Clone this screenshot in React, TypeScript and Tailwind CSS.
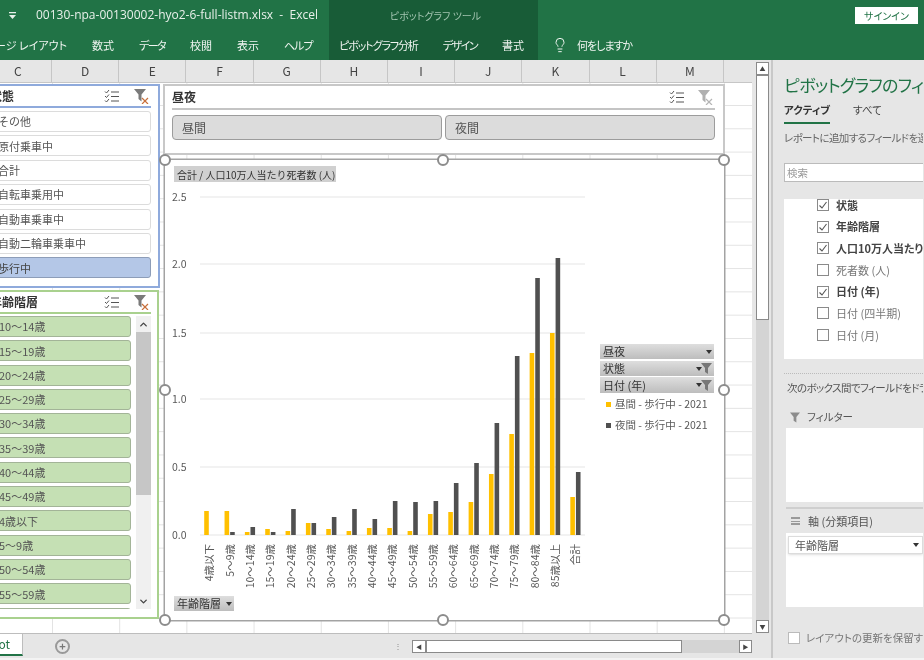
import React from 'react';
import { ChevronDown, ChevronUp, Lightbulb } from 'lucide-react';

const columns = ['C', 'D', 'E', 'F', 'G', 'H', 'I', 'J', 'K', 'L', 'M'];

const ageRows = ['10〜14歳', '15〜19歳', '20〜24歳', '25〜29歳', '30〜34歳', '35〜39歳', '40〜44歳', '45〜49歳', '4歳以下', '5〜9歳', '50〜54歳', '55〜59歳', '60〜64歳'];
const stateRows = ['その他', '原付乗車中', '合計', '自転車乗用中', '自動車乗車中', '自動二輪車乗車中'];

// pixel heights above the baseline: [label, day, night]
const bars: [string, number, number][] = [
  ['4歳以下', 24, 0], ['5〜9歳', 24, 3], ['10〜14歳', 3, 8], ['15〜19歳', 6, 3], ['20〜24歳', 4, 26],
  ['25〜29歳', 12, 12], ['30〜34歳', 6, 18], ['35〜39歳', 4, 26], ['40〜44歳', 7, 16], ['45〜49歳', 7, 34],
  ['50〜54歳', 4, 33], ['55〜59歳', 21, 34], ['60〜64歳', 23, 52], ['65〜69歳', 33, 72], ['70〜74歳', 61, 112],
  ['75〜79歳', 101, 179], ['80〜84歳', 182, 257], ['85歳以上', 202, 277], ['合計', 38, 63],
];

const gridLines: [string, number][] = [['2.5', 197], ['2.0', 264], ['1.5', 333], ['1.0', 399], ['0.5', 467], ['0.0', 535]];

const fields: [string, boolean][] = [
  ['状態', true], ['年齢階層', true], ['人口10万人当たり死者数 (人)', true], ['死者数 (人)', false],
  ['日付 (年)', true], ['日付 (四半期)', false], ['日付 (月)', false],
];

const handles = [
  'left-[-6px] top-[-6px]', 'left-[272px] top-[-6px]', 'left-[553px] top-[-6px]', 'left-[-6px] top-[224px]',
  'left-[553px] top-[224px]', 'left-[-6px] top-[454px]', 'left-[272px] top-[454px]', 'left-[553px] top-[454px]',
];

const ChecklistIcon = () => (
  <svg width="15" height="14" viewBox="0 0 15 14" fill="none" stroke="#555" strokeWidth="1">
    <path d="M1 2.5l1.5 1.5L5 1M1 7l1.5 1.5L5 5.5M1 11.5L2.5 13 5 10" />
    <path d="M7 3h8M7 7.5h8M7 12h8" />
  </svg>
);

const ClearFilterIcon = ({ muted }: { muted?: boolean }) => (
  <svg width="15" height="15" viewBox="0 0 15 15">
    <path d="M0 0h12L7.5 5.5v7L4.5 10V5.5z" fill={muted ? '#b0b0b0' : '#7a7a7a'} />
    <path d="M8 9l6 6M14 9l-6 6" stroke={muted ? '#b5b5b5' : '#c8703c'} strokeWidth="1.2" />
  </svg>
);

const SlicerHeader = ({ title, line }: { title: string; line: string }) => (
  <div className={`flex items-center h-[22px] border-b-2 ${line}`}>
    <span className="flex-1 text-[12px] font-bold text-[#333]">{title}</span>
    <span className="mr-[15px]"><ChecklistIcon /></span>
    <span className="mr-[2px]"><ClearFilterIcon /></span>
  </div>
);

const DropArrow = () => <span className="border-x-[3.5px] border-t-[4px] border-x-transparent border-t-[#333]" />;

const FieldButton = ({ label, filter, className }: { label: string; filter?: boolean; className: string }) => (
  <div className={`absolute flex items-center pl-[3px] pr-[2px] text-[11px] text-[#333] bg-gradient-to-b from-[#dedede] to-[#bdbdbd] ${className}`}>
    <span className="flex-1">{label}</span>
    <DropArrow />
    {filter && (
      <svg width="11" height="11" viewBox="0 0 11 11" className="ml-[-1px]">
        <path d="M0 0h11L7 5v6L4 9V5z" fill="#777" />
      </svg>
    )}
  </div>
);

const ChartPlot = () => (
  <svg viewBox="165 160 559 460" className="absolute inset-0 w-full h-full">
    {gridLines.map(([label, y]) => (
      <g key={label}>
        <line x1="200" x2="585" y1={y} y2={y} stroke="#e6e6e6" strokeWidth="1.2" />
        <text x="172" y={y + 4} fontSize="10.5" fill="#595959">{label}</text>
      </g>
    ))}
    {bars.map(([label, day, night], i) => {
      const center = 209.2 + 20.34 * i;
      return (
        <g key={label}>
          <rect x={center - 5} y={535 - day} width="4.6" height={day} fill="#ffc000" />
          <rect x={center + 0.6} y={535 - night} width="4.6" height={night} fill="#505050" />
          <text x={center + 4} y="544" fontSize="10.5" fill="#595959" textAnchor="end" transform={`rotate(-90 ${center + 4} 544)`}>
            {label}
          </text>
        </g>
      );
    })}
  </svg>
);

const Sheet = () => (
  <div className="relative flex-1 overflow-hidden bg-white bg-[linear-gradient(to_right,#e3e3e3_1px,transparent_1px),linear-gradient(to_bottom,#e3e3e3_1px,transparent_1px)] bg-size-[67.2px_23.3px] bg-position-[52px_22px]">
    {/* 状態 slicer */}
    <div className="absolute left-[-14px] top-[1px] w-[174px] h-[204px] bg-white border-2 border-[#8faadc] pl-[2px] pr-[7px] [font-feature-settings:normal]">
      <SlicerHeader title="状態" line="border-[#8faadc]" />
      <div className="flex flex-col gap-[3.4px] mt-[3px]">
        {stateRows.map((row) => (
          <div key={row} className="h-[21px] flex items-center pl-[7px] bg-white border border-[#dcdcdc] rounded-[3px] text-[11px] text-[#555] whitespace-nowrap">{row}</div>
        ))}
        <div className="h-[21px] flex items-center pl-[7px] bg-[#b4c7e7] border border-[#8d9db8] rounded-[3px] text-[11px] text-[#444]">歩行中</div>
      </div>
    </div>

    {/* 年齢階層 slicer */}
    <div className="absolute left-[-14px] top-[207px] w-[173px] h-[329px] bg-white border-2 border-[#a9d18e] pl-[2px] pr-[6px] [font-feature-settings:normal]">
      <SlicerHeader title="年齢階層" line="border-[#a9d18e]" />
      <div className="flex gap-[5px] mt-[2px] h-[293px]">
        <div className="flex-1 flex flex-col gap-[3.3px] overflow-hidden">
          {ageRows.map((row) => (
            <div key={row} className="h-[21px] shrink-0 flex items-center pl-[8px] bg-[#c5e0b4] border border-[#a3b498] rounded-[3px] text-[11px] text-[#555] whitespace-nowrap">{row}</div>
          ))}
        </div>
        <div className="w-[15px] flex flex-col bg-[#f0f0f0] text-[#444]">
          <div className="h-[16px] flex items-center justify-center"><ChevronUp size={11} strokeWidth={3} /></div>
          <div className="h-[163px] bg-[#c6c6c6]" />
          <div className="flex-1" />
          <div className="h-[16px] flex items-center justify-center"><ChevronDown size={11} strokeWidth={3} /></div>
        </div>
      </div>
    </div>

    {/* 昼夜 slicer */}
    <div className="absolute left-[163px] top-[1px] w-[562px] h-[71px] bg-white border-2 border-[#c8c8c8] pl-[7px] pr-[8px]">
      <div className="flex items-center h-[24px] border-b-2 border-[#c4c4c4]">
        <span className="flex-1 text-[12px] font-bold text-[#333]">昼夜</span>
        <span className="mr-[14px]"><ChecklistIcon /></span>
        <span className="mr-[2px]"><ClearFilterIcon muted /></span>
      </div>
      <div className="flex gap-[3px] mt-[5px]">
        <div className="flex-1 h-[25px] flex items-center pl-[9px] bg-[#dcdcdc] border border-[#9c9c9c] rounded-[4px] text-[12px] text-[#555]">昼間</div>
        <div className="flex-1 h-[25px] flex items-center pl-[9px] bg-[#dcdcdc] border border-[#9c9c9c] rounded-[4px] text-[12px] text-[#555]">夜間</div>
      </div>
    </div>

    {/* pivot chart */}
    <div className="absolute left-[165px] top-[77px] w-[559px] h-[460px] bg-white ring-[1.5px] ring-[#a3a3a3] [font-feature-settings:normal]">
      <ChartPlot />
      <div className="absolute left-[9px] top-[6px] w-[162px] h-[16px] flex items-center pl-[3px] bg-[#d0d0d0] text-[10px] text-[#333] whitespace-nowrap overflow-hidden">合計 / 人口10万人当たり死者数 (人)</div>
      <FieldButton label="昼夜" className="left-[435px] top-[184px] w-[114px] h-[15px]" />
      <FieldButton label="状態" filter className="left-[435px] top-[201px] w-[114px] h-[15px]" />
      <FieldButton label="日付 (年)" filter className="left-[435px] top-[217px] w-[114px] h-[16px]" />
      <FieldButton label="年齢階層" className="left-[9px] top-[436px] w-[60px] h-[15px]" />
      <div className="absolute left-[441px] top-[236px] flex flex-col gap-[5px] text-[10.5px] text-[#595959]">
        <div className="flex items-center gap-[4px] h-[16px] whitespace-nowrap"><span className="w-[5px] h-[5px] bg-[#ffc000]" />昼間 - 歩行中 - 2021</div>
        <div className="flex items-center gap-[4px] h-[16px] whitespace-nowrap"><span className="w-[5px] h-[5px] bg-[#505050]" />夜間 - 歩行中 - 2021</div>
      </div>
      {handles.map((pos) => (
        <span key={pos} className={`absolute w-[12px] h-[12px] rounded-full bg-white border-2 border-[#8c8c8c] ${pos}`} />
      ))}
    </div>
  </div>
);

const Pane = () => (
  <div className="w-[152px] ml-[2px] border-l-2 border-[#c8c8c8] pl-[11px] overflow-hidden whitespace-nowrap">
    <div className="mt-[13px] h-[24px] text-[17px] leading-[24px] tracking-[-0.7px] text-[#217346]">ピボットグラフのフィールド</div>
    <div className="flex h-[25px] mt-[5px] text-[10.5px]">
      <div className="w-[46px] h-[22px] border-b-2 border-[#217346] font-bold text-[#333]">アクティブ</div>
      <div className="ml-[23px] text-[#444]">すべて</div>
    </div>
    <div className="mt-[3px] h-[15px] leading-[15px] text-[10.5px] tracking-[-0.6px] text-[#666]">レポートに追加するフィールドを選択してください:</div>
    <div className="mt-[18px] h-[19px] w-[160px] flex items-center pl-[2px] bg-white border border-[#bbb] text-[10.5px] text-[#999]">検索</div>
    <div className="mt-[17px] h-[160px] w-[160px] bg-white overflow-hidden">
      <div className="-mt-[5px] pl-[33px]">
        {fields.map(([name, on]) => (
          <div key={name} className="h-[21.7px] flex items-center gap-[7px]">
            <span className="w-[12px] h-[12px] shrink-0 flex items-center justify-center bg-white border border-[#8a8a8a]">
              {on && (
                <svg width="10" height="10" viewBox="0 0 10 10" fill="none" stroke="#555" strokeWidth="1.1">
                  <path d="M1.5 5.5L4 8l4.5-6" />
                </svg>
              )}
            </span>
            <span className={on ? 'text-[11px] font-bold text-[#444]' : 'text-[11px] text-[#777]'}>{name}</span>
          </div>
        ))}
      </div>
    </div>
    <div className="mt-[14px] border-t border-dotted border-[#bbb]" />
    <div className="ml-[3px] mt-[6px] h-[15px] leading-[15px] text-[10.5px] tracking-[-0.6px] text-[#555]">次のボックス間でフィールドをドラッグしてください:</div>
    <div className="ml-[6px] mt-[14px] h-[16px] flex items-center gap-[7px] text-[10.5px] text-[#555]">
      <svg width="10" height="11" viewBox="0 0 11 11"><path d="M0 0h11L7 5v6L4 9V5z" fill="#8c8c8c" /></svg>
      フィルター
    </div>
    <div className="ml-[2px] mt-[3px] h-[74px] w-[160px] bg-white" />
    <div className="ml-[2px] mt-[5px] border-t-2 border-[#cfcfcf]" />
    <div className="ml-[7px] mt-[3px] h-[18px] flex items-center gap-[8px] text-[11px] text-[#555]">
      <span className="w-[9px] h-[8px] border-y-2 border-[#9a9a9a] flex items-center"><span className="w-full h-[1px] bg-[#9a9a9a]" /></span>
      軸 (分類項目)
    </div>
    <div className="ml-[2px] mt-[3px] h-[74px] w-[160px] bg-white pt-[3px] pl-[2px]">
      <div className="h-[18px] w-[135px] flex items-center pl-[6px] pr-[3px] bg-white border border-[#dcdcdc] shadow-sm text-[11px] text-[#555]">
        <span className="flex-1">年齢階層</span>
        <DropArrow />
      </div>
    </div>
    <div className="ml-[4px] mt-[23px] flex items-center gap-[6px] text-[10.5px] text-[#777]">
      <span className="w-[12px] h-[12px] shrink-0 bg-white border border-[#bbb]" />
      レイアウトの更新を保留する
    </div>
  </div>
);

export default function App() {
  return (
    <div className="w-[924px] h-[660px] overflow-hidden flex flex-col bg-[#e6e6e6] font-['Noto_Sans_CJK_JP',sans-serif] [font-feature-settings:'palt'] blur-[0.5px]">
      {/* title bar */}
      <div className="flex h-[30px] bg-[#217346] text-white shrink-0">
        <div className="w-[329px] flex items-center">
          <svg width="7" height="7" viewBox="0 0 7 7" className="ml-[9px] mr-[20px]" fill="#e8f0ea">
            <path d="M0 0h7v1.2H0zM0 3h7L3.5 7z" />
          </svg>
          <span className="font-['Open_Sans',sans-serif] text-[12px] whitespace-pre text-[#e8f0ea]">00130-npa-00130002-hyo2-6-full-listm.xlsx  -  Excel</span>
        </div>
        <div className="w-[209px] bg-[#185c37] flex items-center justify-center pl-[4px] text-[10px] text-[#a2c4b0]">ピボットグラフ ツール</div>
        <div className="flex-1 flex items-center justify-end pr-[6px]">
          <span className="w-[63px] h-[17px] flex items-center justify-center bg-white text-[10px] text-[#217346]">サインイン</span>
        </div>
      </div>

      {/* ribbon tabs */}
      <div className="flex h-[30px] bg-[#217346] text-[11px] text-[#f0f5f1] shrink-0 whitespace-nowrap">
        <div className="w-[329px] shrink-0 overflow-hidden flex items-center gap-[25px]">
          <span className="-ml-[16px]">ページ レイアウト</span>
          <span>数式</span>
          <span className="tracking-[-1.6px]">データ</span>
          <span>校閲</span>
          <span>表示</span>
          <span className="tracking-[-1px]">ヘルプ</span>
        </div>
        <div className="w-[209px] shrink-0 bg-[#185c37] flex items-center gap-[25px] pl-[10px]">
          <span className="tracking-[-1.1px]">ピボットグラフ分析</span>
          <span className="tracking-[-1.5px]">デザイン</span>
          <span>書式</span>
        </div>
        <div className="flex items-center pl-[14px] gap-[9px]">
          <Lightbulb size={16} strokeWidth={1.5} />
          <span className="tracking-[-1px]">何をしますか</span>
        </div>
      </div>

      <div className="flex flex-1 min-h-0">
        {/* workbook */}
        <div className="w-[752px] flex flex-col">
          <div className="flex h-[23px] shrink-0 -ml-[15.2px] bg-[#e6e6e6] border-b border-[#c6c6c6] text-[12px] text-[#444]">
            {columns.map((c) => (
              <div key={c} className="w-[67.2px] shrink-0 flex items-center justify-center border-r border-[#c6c6c6]">{c}</div>
            ))}
          </div>
          <Sheet />
          {/* sheet tabs and horizontal scrollbar */}
          <div className="h-[25px] shrink-0 flex items-center border-t border-[#bdbdbd]">
            <div className="w-[23px] h-[22px] self-start bg-white border-r border-[#bdbdbd] border-b-2 border-b-[#217346] text-[12px] text-[#217346] flex items-center justify-end pr-[12px]">ot</div>
            <span className="ml-[32px] w-[15px] h-[15px] rounded-full border-2 border-[#999] flex items-center justify-center text-[11px] font-bold leading-none text-[#777]">+</span>
            <span className="ml-[324px] text-[8px] text-[#888]">⋮</span>
            <div className="ml-[10px] w-[343px] h-[13px] flex bg-[#d4d4d4]">
              <span className="w-[14px] flex items-center justify-center bg-white border border-[#8a8a8a] text-[6px] text-[#444]">◀</span>
              <span className="w-[256px] bg-white border border-[#8a8a8a]" />
              <span className="flex-1" />
              <span className="w-[13px] flex items-center justify-center bg-white border border-[#8a8a8a] text-[6px] text-[#444]">▶</span>
            </div>
          </div>
        </div>

        {/* vertical scrollbar */}
        <div className="w-[13px] ml-[4px] mt-[2px] mb-[25px] flex flex-col bg-[#d4d4d4]">
          <span className="h-[13px] flex items-center justify-center bg-white border border-[#8a8a8a] text-[6px] text-[#444]">▲</span>
          <span className="h-[245px] bg-white border border-[#8a8a8a]" />
          <span className="flex-1" />
          <span className="h-[13px] flex items-center justify-center bg-white border border-[#8a8a8a] text-[6px] text-[#444]">▼</span>
        </div>

        <Pane />
      </div>
      <div className="h-[2px] shrink-0 bg-[#f3f3f3]" />
    </div>
  );
}
